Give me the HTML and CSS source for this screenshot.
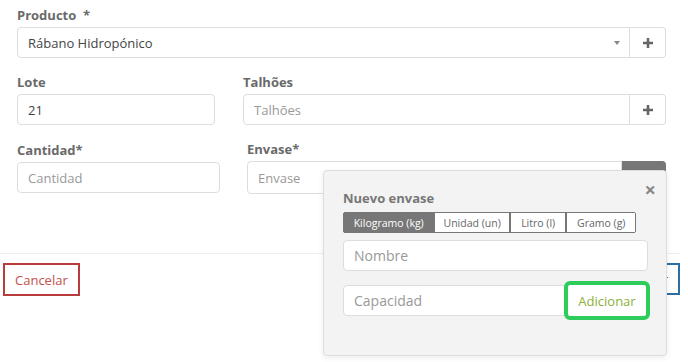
FILE: index.html
```html
<!DOCTYPE html>
<html>
<head>
    <title>Nueva cosecha</title>
    <link rel="stylesheet" href="styles.css">
</head>
<body>
    <div class="form">
        <div class="field">
            <label>Producto&nbsp; *</label>
            <div class="input-group">
                <div class="select">
                    <span>Rábano Hidropónico</span>
                    <span class="caret"></span>
                </div>
                <button class="addon">
                    <svg width="12" height="12" viewBox="0 0 12 12"><path d="M6 1v10M1 6h10" stroke="#666" stroke-width="2.6"/></svg>
                </button>
            </div>
        </div>

        <div class="row">
            <div class="field lote">
                <label>Lote</label>
                <input type="text" value="21">
            </div>
            <div class="field grow talhoes">
                <label>Talhões</label>
                <div class="input-group">
                    <input type="text" placeholder="Talhões">
                    <button class="addon">
                        <svg width="12" height="12" viewBox="0 0 12 12"><path d="M6 1v10M1 6h10" stroke="#666" stroke-width="2.6"/></svg>
                    </button>
                </div>
            </div>
        </div>

        <div class="row">
            <div class="field cantidad">
                <label>Cantidad*</label>
                <input type="text" placeholder="Cantidad">
            </div>
            <div class="field grow envase">
                <label>Envase*</label>
                <div class="input-group">
                    <input type="text" placeholder="Envase">
                    <button class="addon dark"></button>
                </div>
            </div>
        </div>
    </div>

    <div class="footer">
        <button class="btn cancel">Cancelar</button>
        <button class="btn save">Guardar</button>
    </div>

    <div class="popover">
        <span class="close">&times;</span>
        <h4>Nuevo envase</h4>
        <div class="units">
            <button class="active">Kilogramo (kg)</button>
            <button>Unidad (un)</button>
            <button>Litro (l)</button>
            <button>Gramo (g)</button>
        </div>
        <input type="text" class="pop-input" placeholder="Nombre">
        <div class="pop-row">
            <input type="text" class="pop-input" placeholder="Capacidad">
            <button class="add">Adicionar</button>
        </div>
    </div>
</body>
</html>
```

FILE: styles.css
```css
body {
    margin: 0;
    font-family: "Open Sans", sans-serif;
    background-color: white;
    color: #444;
    position: relative;
    height: 362px;
    overflow: hidden;
}
.form {
    padding: 6px 22px 0 17px;
}
.field label {
    display: block;
    font-size: 13px;
    font-weight: bold;
    color: #6a6a6a;
    line-height: 18px;
    margin-bottom: 3px;
}
.field {
    margin-bottom: 15px;
}
.row {
    display: flex;
}
.lote {
    width: 198px;
    margin-right: 28px;
}
.cantidad {
    width: 203px;
    margin-right: 27px;
    padding-top: 1px;
}
.grow {
    flex: 1;
}
input, .select {
    box-sizing: border-box;
    width: 100%;
    height: 31px;
    border: 1px solid #ddd;
    border-radius: 4px;
    padding: 0 10px;
    font-family: "Open Sans", sans-serif;
    font-size: 13px;
    color: #444;
    background: white;
    outline: none;
}
input::placeholder {
    color: #999;
}
.select {
    display: flex;
    align-items: center;
    justify-content: space-between;
}
.caret {
    width: 0;
    height: 0;
    border-left: 3px solid transparent;
    border-right: 3px solid transparent;
    border-top: 4px solid #888;
    margin-right: -1px;
}
.input-group {
    display: flex;
}
.input-group input,
.input-group .select {
    flex: 1;
    border-radius: 4px 0 0 4px;
}
.addon {
    width: 36px;
    height: 31px;
    border: 1px solid #ddd;
    border-left: none;
    border-radius: 0 4px 4px 0;
    background: white;
    display: flex;
    align-items: center;
    justify-content: center;
    padding: 0;
}
.addon.dark {
    width: 44px;
    height: 33px;
    background: #777;
    border-color: #777;
}
.envase input {
    height: 33px;
}
.footer {
    display: flex;
    justify-content: space-between;
    border-top: 1px solid #eee;
    margin: 44px 8px 0 0;
    padding: 9px 0 0 3px;
}
.btn {
    height: 33px;
    background: white;
    font-family: "Open Sans", sans-serif;
    font-size: 13px;
    padding: 0 10px;
    cursor: pointer;
}
.cancel {
    border: 2px solid #b83c3c;
    color: #c0504d;
}
.save {
    border: 2px solid #2d6ea3;
    color: #2d6ea3;
    height: 32px;
}
.popover {
    position: absolute;
    left: 323px;
    top: 170px;
    width: 344px;
    height: 186px;
    box-sizing: border-box;
    background: #f3f3f3;
    border: 1px solid #ddd;
    border-radius: 4px;
    box-shadow: 0 2px 6px rgba(0,0,0,0.08);
    padding: 17px 18px 0 19px;
}
.close {
    position: absolute;
    right: 10px;
    top: 5px;
    font-size: 20px;
    font-weight: bold;
    color: #888;
}
.popover h4 {
    margin: 1px 0 5px;
    font-size: 13px;
    color: #777;
    line-height: 18px;
}
.units {
    display: flex;
    width: 293px;
    height: 21px;
    border: 1px solid #777;
    border-radius: 2px;
    box-sizing: border-box;
    background: #777;
    margin-bottom: 7px;
}
.units button {
    border: none;
    border-left: 2px solid #777;
    background: white;
    color: #666;
    font-family: "Open Sans", sans-serif;
    font-size: 10.5px;
    padding: 0;
    height: 19px;
    cursor: pointer;
}
.units button:nth-child(1) { width: 90px; }
.units button:nth-child(2) { width: 76px; }
.units button:nth-child(3) { width: 57px; }
.units button:nth-child(4) { width: 70px; }
.units button.active {
    background: #777;
    color: white;
    border-left: none;
}
.pop-input {
    height: 31px;
    width: 305px;
    margin-bottom: 10px;
    font-size: 14px;
}
.pop-row {
    display: flex;
    align-items: center;
    width: 307px;
}
.pop-row .pop-input {
    flex: 1;
    margin: 0;
    border-radius: 4px 0 0 4px;
}
.add {
    width: 86px;
    height: 39px;
    margin-left: -4px;
    box-sizing: border-box;
    border: 4px solid #2ecc5a;
    border-radius: 6px;
    background: white;
    color: #8bb13a;
    font-family: "Open Sans", sans-serif;
    font-size: 13px;
    padding: 0;
    cursor: pointer;
}
```
